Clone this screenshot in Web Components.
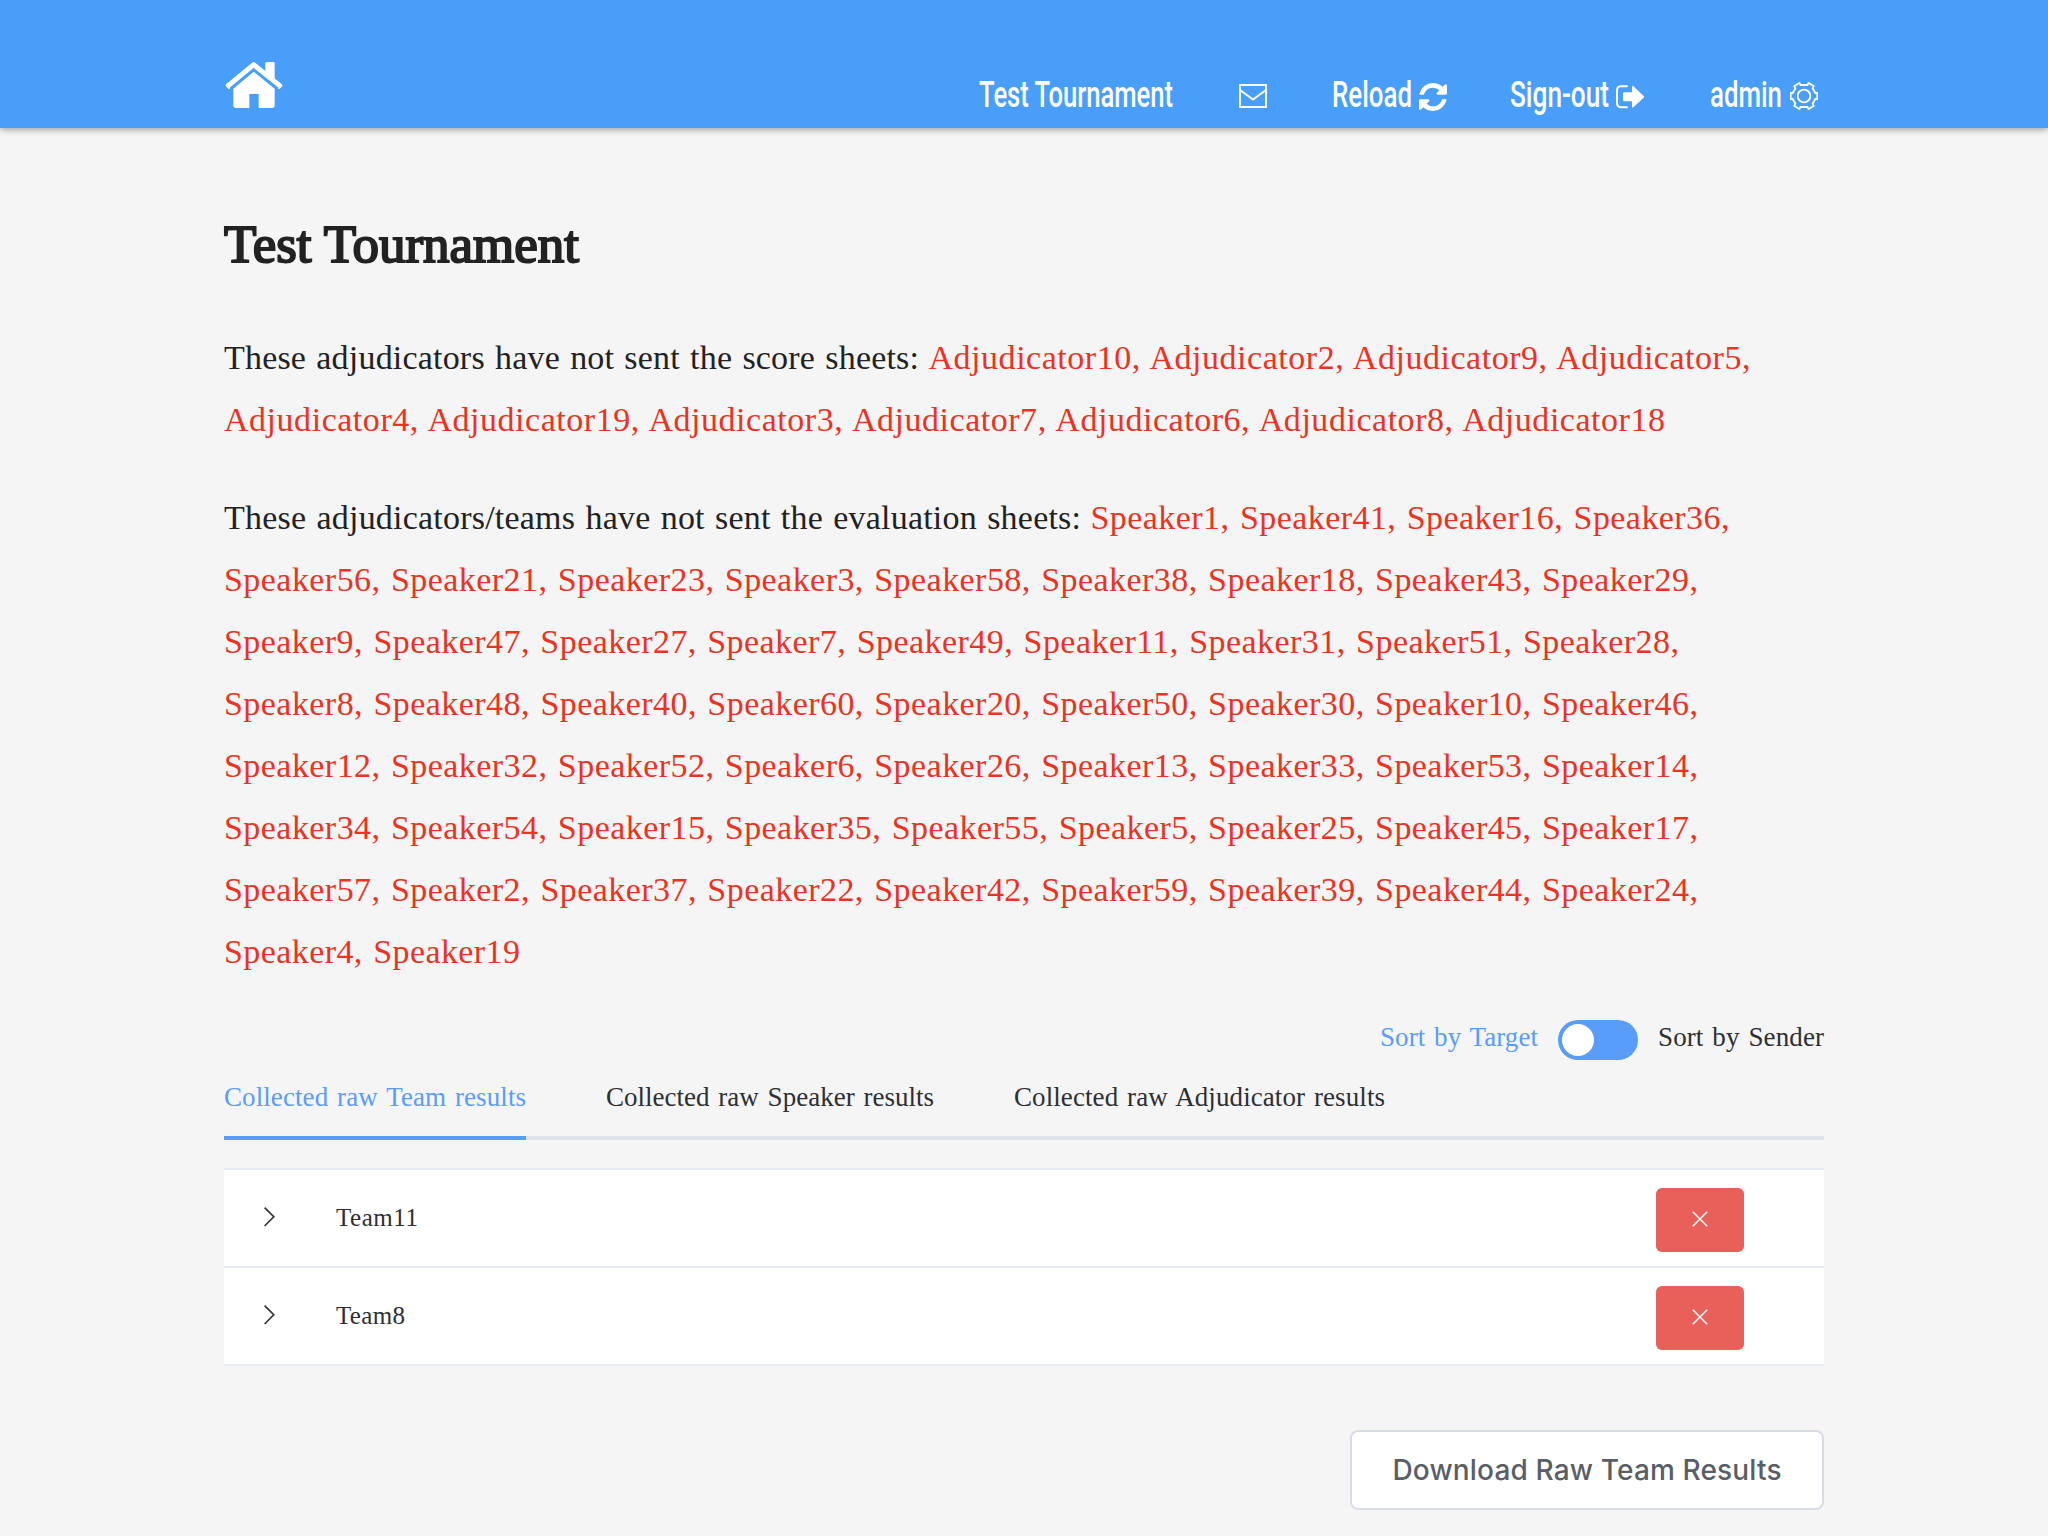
<!DOCTYPE html>
<html lang="en">
<head>
<meta charset="utf-8">
<title>Test Tournament</title>
<style>
html,body{margin:0;height:100%;background:#f5f5f5;overflow:hidden}
body{font-family:"Liberation Serif","Times New Roman",serif;color:#222}
</style>
</head>
<body>
<tournament-page></tournament-page>
<script>
class Base extends HTMLElement{
  render(html){ if(!this.shadowRoot){ this.attachShadow({mode:'open'}).innerHTML=html; } }
}

/* One line of text set to an exact measure, by tracking or by condensing. */
class FitText extends Base{
  connectedCallback(){
    this.render(`<style>:host{display:block;flex:none;white-space:pre}span{display:inline-block;transform-origin:0 50%}</style><span></span>`);
    const s=this.shadowRoot.querySelector('span'), w=+this.getAttribute('w'), t=this.getAttribute('text');
    s.textContent=t;
    this.style.width=w+'px';
    const n=s.getBoundingClientRect().width;
    if(this.hasAttribute('condense')) s.style.transform=`scaleX(${w/n})`;
    else s.style.letterSpacing=((w-n)/(t.length-1))+'px';
  }
}

const icons={
 home:[58,46,'75 66 174 138','<path d="M82 139L161 74L242 139" fill="none" stroke="#fff" stroke-width="15" stroke-linejoin="round"/><path d="M76 137l6-6 9 14-5 3zM248 137l-6-6-9 14 5 3z"/><path d="M196 70q0-4 4-4h20q4 0 4 4v49l-28-23z"/><path d="M161 95L224 146V196q0 8-8 8H176V162H148V204H108q-8 0-8-8V146z"/>'],
 mail:[28,24,'0 0 28 24','<path d="M1 1H27V23H1zM1 6L14 15.5L27 6" fill="none" stroke="#fff" stroke-width="1.9"/>'],
 reload:[28,28,'0 0 1536 1536','<path d="M1511 928q0 5-1 7-64 268-268 434.500t-478 166.500q-146 0-282.500-55t-243.500-157l-129 129q-19 19-45 19t-45-19-19-45v-448q0-26 19-45t45-19h448q26 0 45 19t19 45-19 45l-137 137q71 66 161 102t187 36q134 0 250-65t186-179q11-17 53-117 8-23 30-23h192q13 0 22.500 9.500t9.500 22.500zm25-800v448q0 26-19 45t-45 19h-448q-26 0-45-19t-19-45 19-45l138-138q-148-137-349-137-134 0-250 65t-186 179q-11 17-53 117-8 23-30 23h-199q-13 0-22.500-9.500t-9.500-22.500v-7q65-268 270-434.500t480-166.500q146 0 284 55.500t245 156.500l130-129q19-19 45-19t45 19 19 45z"/>'],
 signout:[28,24,'468 104 84 72','<path d="M503 108H484q-13 0-13 13V158q0 13 13 13H503" fill="none" stroke="#fff" stroke-width="6"/><path d="M489 129q0-3 3-3H516V110q0-5 4-2L551 137q2 3 0 5L520 171q-4 3-4-2V153H492q-3 0-3-3z"/>'],
 gear:[28,28,'0 0 84 84','<g fill="none" stroke="#fff" stroke-width="5.500"><circle cx="42" cy="42" r="19"/><path d="M28 3L32 9H52L56 3L71 12L68 19L76 33H82V51H76L68 65L71 72L56 81L52 75H32L28 81L13 72L16 65L8 51H2V33H8L16 19L13 12z"/></g>'],
 chevron:[12,20,'0 0 12 20','<path d="M.6 .6L9.800 9.800L.6 19" fill="none" stroke="#2d2f33" stroke-width="1.600"/>'],
 close:[16,16,'0 0 16 16','<path d="M.8 .8L15.200 15.200M15.200 .8L.8 15.200" fill="none" stroke="#fff" stroke-width="1.500"/>']
};
class UiIcon extends Base{
  connectedCallback(){
    const [w,h,vb,g]=icons[this.getAttribute('name')];
    this.render(`<style>:host{display:block;flex:none}svg{display:block;fill:#fff}</style><svg width="${w}" height="${h}" viewBox="${vb}">${g}</svg>`);
  }
}

class TopBar extends Base{
  connectedCallback(){
    this.render(`<style>
:host{display:block;position:relative;height:128px;background:#489ef9;box-shadow:0 1px 7px rgba(0,0,0,.42);color:#fff;font:500 36px/63px Roboto,sans-serif}
.in{display:flex;justify-content:space-between;width:1600px;margin:0 auto;box-sizing:border-box;padding:62px 6px 0 1px}
nav{display:flex;margin-top:2px}
a{display:flex;margin-left:64px}
a ui-icon{margin-left:8px}
</style><div class="in"><ui-icon name="home"></ui-icon><nav>
<a><fit-text condense w="194" text="Test Tournament"></fit-text></a>
<a style="margin-left:66px"><ui-icon name="mail" style="margin:20px 0 0"></ui-icon></a>
<a style="margin-left:65px"><fit-text condense w="80" text="Reload"></fit-text><ui-icon name="reload" style="margin:19px 0 0 7px"></ui-icon></a>
<a style="margin-left:63px"><fit-text condense w="99" text="Sign-out"></fit-text><ui-icon name="signout" style="margin:21px 0 0 7px"></ui-icon></a>
<a style="margin-left:66px"><fit-text condense w="72" text="admin"></fit-text><ui-icon name="gear" style="margin:18px 0 0 8px"></ui-icon></a>
</nav></div>`);
  }
}

/* A lead sentence followed by the names that are still missing. */
class MissingList extends Base{
  connectedCallback(){
    this.render(`<style>:host{display:block;font-size:34px;line-height:62px;word-spacing:1.500px;color:#222}.first{display:flex;gap:9.500px}::slotted(*){color:#ea3323}</style><div class="first"><slot name="lead"></slot><slot name="first"></slot></div><slot></slot>`);
  }
}

class SortSwitch extends Base{
  connectedCallback(){
    this.render(`<style>:host{display:flex;justify-content:flex-end;height:40px;font-size:27px;line-height:35px;word-spacing:2px;color:#2d2f33}
.on{color:#5a9cf8}.track{width:80px;height:40px;box-sizing:border-box;padding:4px;border-radius:20px;background:#589df8;margin:0 20px}
.knob{width:32px;height:32px;border-radius:50%;background:#fff}</style>
<fit-text class="on" w="158" text="Sort by Target"></fit-text><div class="track"><div class="knob"></div></div><fit-text w="166" text="Sort by Sender"></fit-text>`);
  }
}

class ResultTabs extends Base{
  connectedCallback(){
    this.render(`<style>:host{display:flex;gap:80px;height:80px;box-sizing:border-box;font-size:27px;line-height:75px;word-spacing:2px;color:#2d2f33;background:linear-gradient(#dfe4ed,#dfe4ed) 0 100%/100% 4px no-repeat}
fit-text{height:76px}.on{color:#5a9cf8;border-bottom:4px solid #589df8}</style>
<fit-text class="on" w="302" text="Collected raw Team results"></fit-text><fit-text w="328" text="Collected raw Speaker results"></fit-text><fit-text w="371" text="Collected raw Adjudicator results"></fit-text>`);
  }
}

class TeamRow extends Base{
  connectedCallback(){
    this.render(`<style>:host{display:flex;height:96px;background:#fff;border-bottom:2px solid #e6ebf5;font-size:25px;line-height:96px;color:#2d2f33}
.chev{margin:37px 60px 0 40px}.del{display:flex;align-items:center;justify-content:center;width:88px;height:64px;padding:0 0 2px;box-sizing:border-box;margin:18px 80px 0 auto;border:0;border-radius:6px;background:#e9605b}</style>
<ui-icon class="chev" name="chevron"></ui-icon><fit-text w="${this.getAttribute('w')}" text="${this.getAttribute('name')}"></fit-text><button class="del" aria-label="Delete"><ui-icon name="close"></ui-icon></button>`);
  }
}

class DownloadButton extends Base{
  connectedCallback(){
    this.render(`<style>:host{display:flex;justify-content:flex-end}
.b{display:flex;justify-content:center;width:474px;height:80px;box-sizing:border-box;border:2px solid #d8dce5;border-radius:8px;background:#fff;color:#5a5e66;font:450 28px/76px Inter,sans-serif}</style>
<div class="b"><fit-text w="389" text="Download Raw Team Results"></fit-text></div>`);
  }
}

class TournamentPage extends Base{
  connectedCallback(){
    this.render(`<style>
:host{display:block;height:1536px;overflow:hidden}
main{width:1600px;margin:0 auto;padding-top:84px}
h1{margin:0 0 51px;font-weight:400;font-size:53px;line-height:64px;color:#222;-webkit-text-stroke:2px #222}
missing-list+missing-list{margin-top:36px}
sort-switch{margin-top:37px}
.table{margin-top:28px;border-top:2px solid #e6ebf5}
download-button{margin-top:64px}
[slot=lead]{color:#222!important}
</style>
<top-bar></top-bar>
<main>
<h1><fit-text w="355" text="Test Tournament"></fit-text></h1>
<missing-list>
<fit-text slot="lead" w="695" text="These adjudicators have not sent the score sheets:"></fit-text>
<fit-text slot="first" w="822" text="Adjudicator10, Adjudicator2, Adjudicator9, Adjudicator5,"></fit-text>
<fit-text w="1441" text="Adjudicator4, Adjudicator19, Adjudicator3, Adjudicator7, Adjudicator6, Adjudicator8, Adjudicator18"></fit-text>
</missing-list>
<missing-list>
<fit-text slot="lead" w="857" text="These adjudicators/teams have not sent the evaluation sheets:"></fit-text>
<fit-text slot="first" w="639" text="Speaker1, Speaker41, Speaker16, Speaker36,"></fit-text>
<fit-text w="1474" text="Speaker56, Speaker21, Speaker23, Speaker3, Speaker58, Speaker38, Speaker18, Speaker43, Speaker29,"></fit-text>
<fit-text w="1455" text="Speaker9, Speaker47, Speaker27, Speaker7, Speaker49, Speaker11, Speaker31, Speaker51, Speaker28,"></fit-text>
<fit-text w="1474" text="Speaker8, Speaker48, Speaker40, Speaker60, Speaker20, Speaker50, Speaker30, Speaker10, Speaker46,"></fit-text>
<fit-text w="1474" text="Speaker12, Speaker32, Speaker52, Speaker6, Speaker26, Speaker13, Speaker33, Speaker53, Speaker14,"></fit-text>
<fit-text w="1474" text="Speaker34, Speaker54, Speaker15, Speaker35, Speaker55, Speaker5, Speaker25, Speaker45, Speaker17,"></fit-text>
<fit-text w="1474" text="Speaker57, Speaker2, Speaker37, Speaker22, Speaker42, Speaker59, Speaker39, Speaker44, Speaker24,"></fit-text>
<fit-text w="296" text="Speaker4, Speaker19"></fit-text>
</missing-list>
<sort-switch></sort-switch>
<result-tabs></result-tabs>
<div class="table"><team-row name="Team11" w="82"></team-row><team-row name="Team8" w="69"></team-row></div>
<download-button></download-button>
</main>`);
  }
}
for(const [n,c] of Object.entries({'fit-text':FitText,'ui-icon':UiIcon,'top-bar':TopBar,'missing-list':MissingList,'sort-switch':SortSwitch,'result-tabs':ResultTabs,'team-row':TeamRow,'download-button':DownloadButton,'tournament-page':TournamentPage})) customElements.define(n,c);
</script>
</body>
</html>
